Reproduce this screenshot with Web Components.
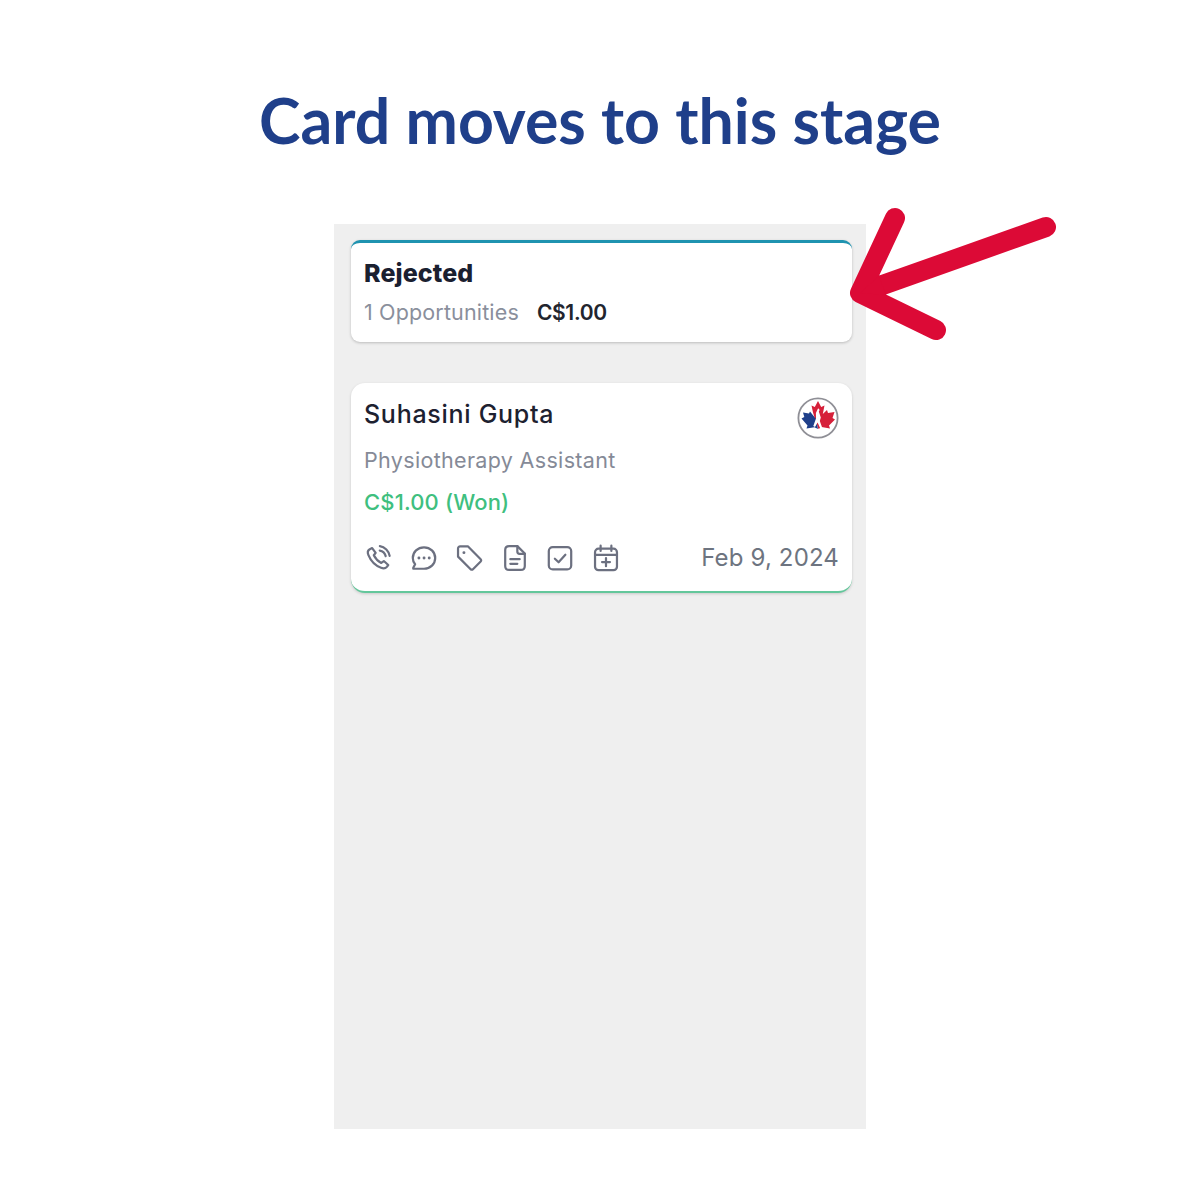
<!DOCTYPE html>
<html lang="en">
<head>
<meta charset="utf-8">
<title>Card moves to this stage</title>
<style>
  html, body { margin: 0; background: #fff; }
  body { width: 1200px; height: 1200px; position: relative; overflow: hidden; }
</style>
</head>
<body>
<slide-frame>
  <span slot="title">Card moves to this stage</span>
  <stage-header name="Rejected" count="1 Opportunities" amount="C$1.00"></stage-header>
  <opportunity-card name="Suhasini Gupta" job="Physiotherapy Assistant" amount="C$1.00 (Won)" date="Feb 9, 2024"></opportunity-card>
</slide-frame>
<pointer-arrow></pointer-arrow>

<script>
/**
 * Slide with heading and the grey pipeline column.
 */
customElements.define('slide-frame', class extends HTMLElement {
  constructor () {
    super()
    this.attachShadow({ mode: 'open' }).innerHTML = `
      <style>
        :host { display: flex; flex-direction: column; align-items: center; }
        h1 {
          margin: 0;
          padding-top: 83px;
          height: 141px;
          font: 700 62.6px/74px Lato, sans-serif;
          color: #1f3f8a;
        }
        #column {
          box-sizing: border-box;
          width: 532px;
          height: 905px;
          padding: 16px 14px 0 17px;
          background: #efefef;
          display: flex;
          flex-direction: column;
          gap: 41px;
        }
      </style>
      <h1><slot name="title"></slot></h1>
      <div id="column"><slot></slot></div>
    `
  }
})

customElements.define('stage-header', class extends HTMLElement {
  constructor () {
    super()
    this.attachShadow({ mode: 'open' }).innerHTML = `
      <style>
        :host {
          display: block;
          box-sizing: border-box;
          height: 102px;
          padding: 16px 13px 0;
          background: #fff;
          border-top: 3px solid #1f93b0;
          border-radius: 9px;
          box-shadow: 0 1px 3px rgba(0, 0, 0, .22);
          font-family: Inter, sans-serif;
        }
        #name { font-size: 25px; line-height: 28px; font-weight: 800; color: #1a2030; letter-spacing: .1px; }
        #meta { display: flex; gap: 18px; margin-top: 11px; line-height: 28px; align-items: baseline; }
        #count { font-size: 21.5px; color: #8a8f9c; letter-spacing: .15px; }
        #amount { font-size: 21px; font-weight: 600; color: #22252e; letter-spacing: -.35px; }
      </style>
      <div id="name"></div>
      <div id="meta"><span id="count"></span><span id="amount"></span></div>
    `
    this.shadowRoot.querySelector('#name').textContent = this.getAttribute('name')
    this.shadowRoot.querySelector('#count').textContent = this.getAttribute('count')
    this.shadowRoot.querySelector('#amount').textContent = this.getAttribute('amount')
  }
})

// Stroke paths on a 24 unit grid.
const icons = {
  phone: '<path d="M7 3.5 4.6 4.7C3 5.7 3 7.6 3.8 9.6 5.6 14 9.8 18.6 14.6 20.4 16.6 21.2 18.4 21 19.6 19.6L20.8 18 17 14.6 14.8 16.2C12.4 15 9.6 12 8.4 9.6L10 7.6Z"/><path d="M13.5 5.6C16 6 18 8 18.6 10.4"/><path d="M13.6 1.8C17.8 2.4 21.4 6 22 10.2"/>',
  chat: '<path d="M12 2.8C17.4 2.8 21.6 6.8 21.6 12S17.4 21.2 12 21.2H2.8V20.4L4.4 17.4C3 15.8 2.4 14 2.4 12 2.4 6.8 6.6 2.8 12 2.8Z"/><path d="M7.6 12h.1M12 12h.1M16.4 12h.1" stroke-width="2.4"/>',
  tag: '<path d="M2.6 4.200C2.6 3.200 3.400 2.400 4.400 2.400H11L22 13.400C22.600 14 22.600 14.800 22 15.400L15.400 22C14.800 22.600 14 22.600 13.400 22L2.600 11.200Z" transform="translate(0 -.4)"/><path d="M7.6 7.400h.1" stroke-width="2.4"/>',
  note: '<path d="M14 1.800H7C5 1.800 3.600 3.200 3.600 5.200V18.800C3.600 20.800 5 22.200 7 22.200H17C19 22.200 20.400 20.800 20.400 18.800V8.200Z"/><path d="M14 1.800V6.400C14 7.600 15 8.400 16 8.400H20.400"/><path d="M8 13h8M8 17h6"/>',
  check: '<rect x="2.4" y="2.6" width="19.2" height="19.2" rx="3.4"/><path d="M7.6 12.6 10.8 15.6 16.6 9.200"/>',
  calendar: '<rect x="2.6" y="4" width="18.8" height="18.4" rx="3"/><path d="M2.600 9.400H21.400M7.400 1.400V6M16.600 1.400V6M12 12V19M8.600 15.500H15.400"/>'
}

customElements.define('action-icon', class extends HTMLElement {
  constructor () {
    super()
    this.attachShadow({ mode: 'open' }).innerHTML = `
      <style>
        :host { display: block; width: 28px; height: 28px; }
        svg { display: block; width: 28px; height: 28px; fill: none; stroke: #6c7080; stroke-width: 1.9; stroke-linecap: round; stroke-linejoin: round; }
      </style>
      <svg viewBox="0 0 24 24">${icons[this.getAttribute('name')]}</svg>
    `
  }
})

customElements.define('opportunity-card', class extends HTMLElement {
  constructor () {
    super()
    this.attachShadow({ mode: 'open' }).innerHTML = `
      <style>
        :host {
          display: block;
          box-sizing: border-box;
          height: 210px;
          padding: 14px 13px 0 13px;
          background: #fff;
          border-bottom: 2.5px solid #63c79b;
          border-radius: 14px;
          box-shadow: 0 1px 3px rgba(0, 0, 0, .16);
          font-family: Inter, sans-serif;
        }
        #top { display: flex; justify-content: space-between; align-items: flex-start; height: 49px; }
        #name { font-size: 25px; line-height: 34px; font-weight: 500; color: #1d2130; letter-spacing: .72px; }
        svg.logo { width: 42px; height: 42px; flex: none; display: block; }
        #job { font-size: 21.5px; line-height: 28px; color: #858a97; letter-spacing: .33px; }
        #amount { font-size: 22px; line-height: 30px; color: #3fbf7f; font-weight: 500; margin-top: 13px; letter-spacing: .15px; }
        #bottom { display: flex; justify-content: space-between; align-items: center; margin-top: 26px; }
        #actions { display: flex; gap: 17.6px; }
        #date { font-size: 24px; color: #6d7480; letter-spacing: .15px; }
      </style>
      <div id="top">
        <div id="name"></div>
        <svg class="logo" viewBox="0 0 42 42">
          <circle cx="21" cy="21" r="19.6" fill="#fff" stroke="#8f8f96" stroke-width="1.8"/>
          <path d="M21 4 24.200 10 27.500 8.500 25.800 17 30 13 31 16 37.500 15 35.500 21 38 22.500 32 28.500 33 31.500 24.500 30 21.500 32 18 22 16 15.500 14.500 8.500 17.800 10Z" fill="#d6203a"/>
          <path d="M4.500 21.500 7.300 20 6 15.500 12 16.500 13 14.500 19 22 21 32 17.500 30.300 9.500 31.500 10.500 28.500Z" fill="#1f3f8a"/>
          <path d="M21 11.500C22.500 11.500 23 13.500 21.800 14.600L23.800 20.500 22.800 24 25.500 31.500 23.300 31.500 20.600 25.500 18 30 16.300 29 19 21.500 18.900 16Z" fill="#fff"/>
        </svg>
      </div>
      <div id="job"></div>
      <div id="amount"></div>
      <div id="bottom">
        <div id="actions">
          <action-icon name="phone"></action-icon>
          <action-icon name="chat"></action-icon>
          <action-icon name="tag"></action-icon>
          <action-icon name="note"></action-icon>
          <action-icon name="check"></action-icon>
          <action-icon name="calendar"></action-icon>
        </div>
        <div id="date"></div>
      </div>
    `
    for (const key of ['name', 'job', 'amount', 'date']) {
      this.shadowRoot.querySelector('#' + key).textContent = this.getAttribute(key)
    }
  }
})

// The red arrow lies over the column, so it keeps its own place on the page.
customElements.define('pointer-arrow', class extends HTMLElement {
  constructor () {
    super()
    this.attachShadow({ mode: 'open' }).innerHTML = `
      <style>
        :host { display: block; position: absolute; left: 840px; top: 200px; width: 230px; height: 150px; }
        svg { display: block; fill: none; stroke: #dc0a36; stroke-width: 20; stroke-linecap: round; stroke-linejoin: round; }
        polygon { fill: #dc0a36; stroke: none; }
      </style>
      <svg width="230" height="150" viewBox="0 0 230 150">
        <path d="M55 18 20 93 96 130M206 27 20 93"/>
        <polygon points="20,93 39,76 46,95"/>
      </svg>
    `
  }
})
</script>
</body>
</html>
